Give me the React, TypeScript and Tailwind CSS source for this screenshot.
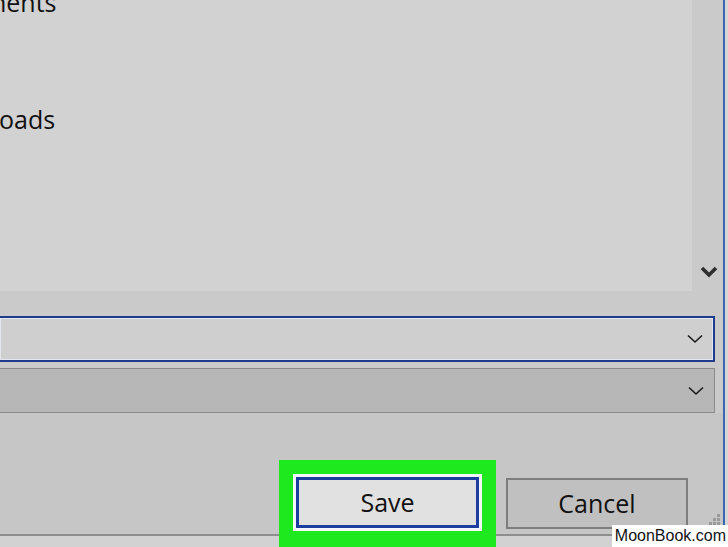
import React from "react";

const font = { fontFamily: '"Open Sans", "Noto Sans", Arial, sans-serif' };

const ThinChevron: React.FC = () => (
  <svg width="16" height="10" viewBox="0 0 16 10" className="shrink-0">
    <path d="M1 1.5 L8 8 L15 1.5" fill="none" stroke="#1a1a1a" strokeWidth="1.6" />
  </svg>
);

const App: React.FC = () => {
  return (
    <div
      className="w-[728px] h-[547px] flex bg-[#d6d6d6] overflow-hidden relative"
      style={font}
    >
      <div className="w-[725px] h-full flex flex-col bg-[#cacaca] border-r-2 border-[#3a66b4]">
        {/* file list + scrollbar */}
        <div className="h-[291px] flex shrink-0">
          <div className="w-[692px] bg-[#d2d2d2] flex flex-col text-[25px] text-[#111] leading-none">
            <div className="-mt-[10px] -ml-[9px]">nents</div>
            <div className="mt-[92px] -ml-[1px]">oads</div>
          </div>
          <div className="flex-1 flex items-end justify-center pb-[12px] pl-[2px]">
            <svg width="18" height="13" viewBox="0 0 18 13">
              <path d="M2 2 L9 9 L16 2" fill="none" stroke="#2e2e2e" strokeWidth="3.6" />
            </svg>
          </div>
        </div>

        {/* file name field */}
        <div className="mt-[25px] h-[46px] w-[715px] shrink-0 bg-[#cfcfcf] border-y-2 border-r-2 border-[#1f3b8c] flex items-center justify-end pr-[10px] shadow-[inset_0_0_0_1px_#e4e6ee]">
          <ThinChevron />
        </div>

        {/* save as type */}
        <div className="mt-[6px] h-[45px] w-[715px] shrink-0 bg-[#b7b7b7] border-y border-r border-[#8c8c8c] flex items-center justify-end pr-[10px]">
          <ThinChevron />
        </div>

        {/* buttons area */}
        <div className="flex-1 flex flex-col">
          <div className="h-[123px] border-b-2 border-[#8e8e8e] bg-[#c6c6c6] flex items-start pl-[279px] pt-[47px] relative">
            <div className="relative z-10 w-[217px] h-[88px] bg-[#1ee81e] pl-[14px] pt-[14px]">
              <div className="w-[189px] h-[57px] bg-[#f4f6f8] p-[3px]">
                <button className="w-full h-full border-[3px] border-[#1b3d9e] bg-[#e1e1e1] flex items-center justify-center text-[25px] text-[#111]">
                  Save
                </button>
              </div>
            </div>
            <button className="ml-[10px] mt-[18px] w-[182px] h-[51px] border-2 border-[#7d7d7d] bg-[#c0c0c0] flex items-center justify-center text-[25px] text-[#111]">
              Cancel
            </button>
            <svg width="12" height="12" viewBox="0 0 12 12" className="absolute right-[2px] bottom-[8px]">
              <rect x="8" y="0" width="3" height="3" fill="#9a9a9a" />
              <rect x="4" y="4" width="3" height="3" fill="#9a9a9a" />
              <rect x="8" y="4" width="3" height="3" fill="#9a9a9a" />
              <rect x="0" y="8" width="3" height="3" fill="#9a9a9a" />
              <rect x="4" y="8" width="3" height="3" fill="#9a9a9a" />
              <rect x="8" y="8" width="3" height="3" fill="#9a9a9a" />
            </svg>
          </div>
          <div className="flex-1 bg-[#d2d2d2]" />
        </div>
      </div>

      {/* watermark */}
      <div
        className="absolute right-0 bottom-0 h-[22px] bg-white flex items-center pl-[3px] pr-[2px] text-[16px] text-[#111] leading-none z-20 whitespace-nowrap"
        style={{ fontFamily: '"Liberation Sans", Arial, sans-serif' }}
      >
        MoonBook.com
      </div>
    </div>
  );
};

export default App;
